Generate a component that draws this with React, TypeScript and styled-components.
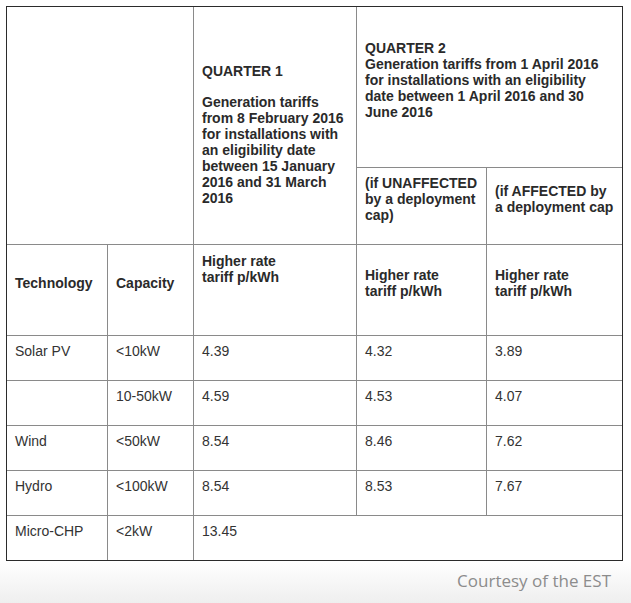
import React from "react";
import styled, { createGlobalStyle, css } from "styled-components";

const GlobalStyle = createGlobalStyle`
  html, body {
    margin: 0;
    padding: 0;
    background: #ffffff;
  }
  body {
    font-family: "Liberation Sans", Arial, sans-serif;
    color: #333333;
  }
`;

const Page = styled.div`
  width: 631px;
  min-height: 603px;
  display: flex;
  flex-direction: column;
  background: #ffffff;
`;

const TableWrap = styled.div`
  padding: 6px 9px 0 6px;
`;

const Table = styled.div`
  display: grid;
  grid-template-columns: 100px 85px 162px 129px 135px;
  grid-template-rows: 160px 76px 90px 44px 44px 44px 44px 44px;
  gap: 1px;
  background: #8a8a8a;
  border: 1px solid #2b2b2b;
  width: 617px;
  box-sizing: border-box;
  font-size: 14px;
  line-height: 16px;
`;

type CellProps = {
  $cols?: number;
  $rows?: number;
  $valign?: "top" | "middle";
  $pt?: number;
  $pb?: number;
  $pr?: number;
  $bold?: boolean;
};

const Cell = styled.div<CellProps>`
  background: #ffffff;
  display: flex;
  flex-direction: column;
  box-sizing: border-box;
  padding: ${(p) => p.$pt ?? 7}px ${(p) => p.$pr ?? 6}px ${(p) => p.$pb ?? 0}px 8px;
  justify-content: ${(p) => (p.$valign === "middle" ? "center" : "flex-start")};
  grid-column: span ${(p) => p.$cols ?? 1};
  grid-row: span ${(p) => p.$rows ?? 1};
  font-weight: ${(p) => (p.$bold ? 700 : 400)};
  ${(p) =>
    p.$bold &&
    css`
      color: #2a2a2a;
    `}
`;

const Para = styled.p<{ $gap?: number }>`
  margin: 0 0 ${(p) => p.$gap ?? 0}px 0;
`;

const Caption = styled.div`
  flex: 1;
  margin-top: 1px;
  min-height: 42px;
  box-sizing: border-box;
  padding: 8px 20px 0 0;
  text-align: right;
  font-family: "Open Sans", "Noto Sans", sans-serif;
  font-size: 17px;
  line-height: 22px;
  color: #8c8c8c;
  background: linear-gradient(to bottom, #ffffff 0%, #f7f7f7 45%, #eeeeee 100%);
`;

type Row = { tech: string; cap: string; q1: string; q2u?: string; q2a?: string };

const rows: Row[] = [
  { tech: "Solar PV", cap: "<10kW", q1: "4.39", q2u: "4.32", q2a: "3.89" },
  { tech: "", cap: "10-50kW", q1: "4.59", q2u: "4.53", q2a: "4.07" },
  { tech: "Wind", cap: "<50kW", q1: "8.54", q2u: "8.46", q2a: "7.62" },
  { tech: "Hydro", cap: "<100kW", q1: "8.54", q2u: "8.53", q2a: "7.67" },
  { tech: "Micro-CHP", cap: "<2kW", q1: "13.45" },
];

const RateLabel = () => (
  <>
    Higher rate
    <br />
    tariff p/kWh
  </>
);

export default function App() {
  return (
    <Page>
      <GlobalStyle />
      <TableWrap>
        <Table>
          <Cell $cols={2} $rows={2} />
          <Cell $rows={2} $bold $pt={56}>
            <Para $gap={15}>QUARTER 1</Para>
            <Para>
              Generation tariffs from 8 February 2016 for installations with an
              eligibility date between 15 January 2016 and 31 March 2016
            </Para>
          </Cell>
          <Cell $cols={2} $bold $pt={33}>
            <Para>QUARTER 2</Para>
            <Para>
              Generation tariffs from 1 April 2016 for installations with an
              eligibility date between 1 April 2016 and 30 June 2016
            </Para>
          </Cell>
          <Cell $bold $valign="middle" $pt={0} $pb={14} $pr={4}>
            (if UNAFFECTED by a deployment cap)
          </Cell>
          <Cell $bold $valign="middle" $pt={0} $pb={14} $pr={4}>
            (if AFFECTED by a deployment cap
          </Cell>

          <Cell $bold $valign="middle" $pt={0} $pb={15}>
            Technology
          </Cell>
          <Cell $bold $valign="middle" $pt={0} $pb={15}>
            Capacity
          </Cell>
          <Cell $bold $pt={8}>
            <RateLabel />
          </Cell>
          <Cell $bold $valign="middle" $pt={0} $pb={15}>
            <RateLabel />
          </Cell>
          <Cell $bold $valign="middle" $pt={0} $pb={15}>
            <RateLabel />
          </Cell>

          {rows.map((r, i) => (
            <React.Fragment key={i}>
              <Cell>{r.tech}</Cell>
              <Cell>{r.cap}</Cell>
              {r.q2u === undefined ? (
                <Cell $cols={3}>{r.q1}</Cell>
              ) : (
                <>
                  <Cell>{r.q1}</Cell>
                  <Cell>{r.q2u}</Cell>
                  <Cell>{r.q2a}</Cell>
                </>
              )}
            </React.Fragment>
          ))}
        </Table>
      </TableWrap>
      <Caption>Courtesy of the EST</Caption>
    </Page>
  );
}
